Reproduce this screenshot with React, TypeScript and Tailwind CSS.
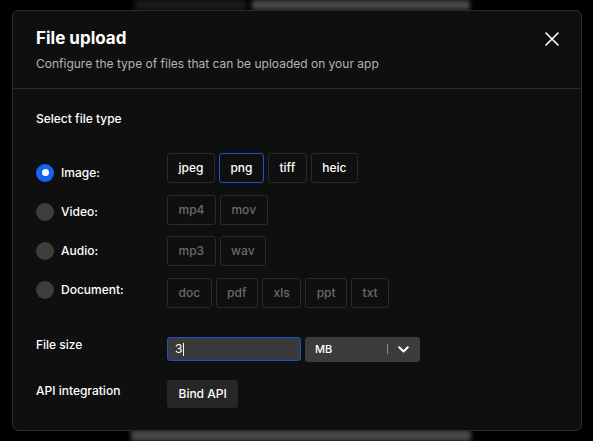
interface FileTypeRow {
  label: string;
  types: string[];
  active: boolean;
}

const rows: FileTypeRow[] = [
  { label: "Image:", types: ["jpeg", "png", "tiff", "heic"], active: true },
  { label: "Video:", types: ["mp4", "mov"], active: false },
  { label: "Audio:", types: ["mp3", "wav"], active: false },
  { label: "Document:", types: ["doc", "pdf", "xls", "ppt", "txt"], active: false },
];

function Radio({ checked }: { checked: boolean }) {
  return checked ? (
    <span className="w-[18px] h-[18px] rounded-full bg-[#1463f3] flex items-center justify-center">
      <span className="w-[7px] h-[7px] rounded-full bg-white" />
    </span>
  ) : (
    <span className="w-[18px] h-[18px] rounded-full bg-[#3d3d3d]" />
  );
}

function Chip({ label, active, selected }: { label: string; active: boolean; selected?: boolean }) {
  return (
    <span
      className={`h-[30px] px-[10.5px] flex items-center rounded-[3px] border text-[12px] font-medium ${
        selected ? "border-[#1553c7]" : "border-[#2a2a2a]"
      } ${active ? "text-white" : "text-[#6b6b6b]"}`}
    >
      {label}
    </span>
  );
}

export default function App() {
  return (
    <div className="relative w-[593px] h-[441px] bg-black overflow-hidden font-['Inter',sans-serif]">
      {/* blurred page behind the dialog */}
      <div className="absolute left-[135px] top-0 w-[112px] h-[10px] bg-[#1d1d1d] blur-[3px]" />
      <div className="absolute left-[252px] top-0 w-[218px] h-[10px] bg-[#474747] blur-[2px]" />
      <div className="absolute left-[131px] bottom-0 w-[340px] h-[11px] bg-[#474747] blur-[2px]" />

      <div className="absolute left-[12px] top-[10px] w-[570px] h-[421px] bg-[#0f0f0f] border border-[#2b2b2b] rounded-[6px]">
        <div className="relative px-[23px] pt-[15px] pb-[16px] border-b border-[#2a2a2a]">
          <h1 className="text-[17px] leading-[24px] font-bold text-white">File upload</h1>
          <p className="mt-[6px] text-[12px] leading-[16px] text-[#b4b4b4]">
            Configure the type of files that can be uploaded on your app
          </p>
          <svg
            className="absolute right-[22px] top-[21px] w-[14px] h-[14px] text-white"
            viewBox="0 0 14 14"
            fill="none"
            stroke="currentColor"
            strokeWidth={1.6}
            strokeLinecap="round"
          >
            <path d="M1 1 13 13M13 1 1 13" />
          </svg>
        </div>

        <div className="px-[23px] pt-[22px]">
          <p className="text-[12px] leading-[16px] font-medium text-white">Select file type</p>

          <div className="mt-[26px] flex">
            <div className="w-[131px] pt-[10.5px] flex flex-col gap-[21.2px]">
              {rows.map((row) => (
                <div key={row.label} className="h-[18px] flex items-center gap-[7px]">
                  <Radio checked={row.active} />
                  <span className="text-[12px] font-medium text-white">{row.label}</span>
                </div>
              ))}
            </div>
            <div className="flex flex-col gap-[11.5px]">
              {rows.map((row) => (
                <div key={row.label} className="flex gap-[4px]">
                  {row.types.map((t) => (
                    <Chip key={t} label={t} active={row.active} selected={t === "png"} />
                  ))}
                </div>
              ))}
            </div>
          </div>

          <div className="mt-[29px] flex items-center">
            <span className="w-[131px] text-[12px] font-medium text-white -mt-[8px]">File size</span>
            <div className="w-[134px] h-[24px] bg-[#3a3a3a] border border-[#1553c7] rounded-[3px] flex items-center px-[7px] text-[12px] text-white">
              3<span className="w-px h-[13px] bg-white ml-[1px]" />
            </div>
            <div className="ml-[4px] w-[115px] h-[25px] bg-[#3c3c3c] rounded-[3px] flex items-center pl-[10px] pr-[11px] text-[11px] font-medium text-white">
              <span className="flex-1">MB</span>
              <span className="w-px h-[10px] bg-[#8a8a8a] mr-[10px]" />
              <svg
                className="w-[11px] h-[7px]"
                viewBox="0 0 11 7"
                fill="none"
                stroke="currentColor"
                strokeWidth={2}
                strokeLinecap="round"
                strokeLinejoin="round"
              >
                <path d="M1.2 1.2 5.5 5.5 9.8 1.2" />
              </svg>
            </div>
          </div>

          <div className="mt-[18px] flex items-center">
            <span className="w-[131px] text-[12px] font-medium text-white -mt-[6px]">API integration</span>
            <button className="h-[28px] px-[11.5px] bg-[#262626] rounded-[3px] text-[12px] font-medium text-white">
              Bind API
            </button>
          </div>
        </div>
      </div>
    </div>
  );
}
